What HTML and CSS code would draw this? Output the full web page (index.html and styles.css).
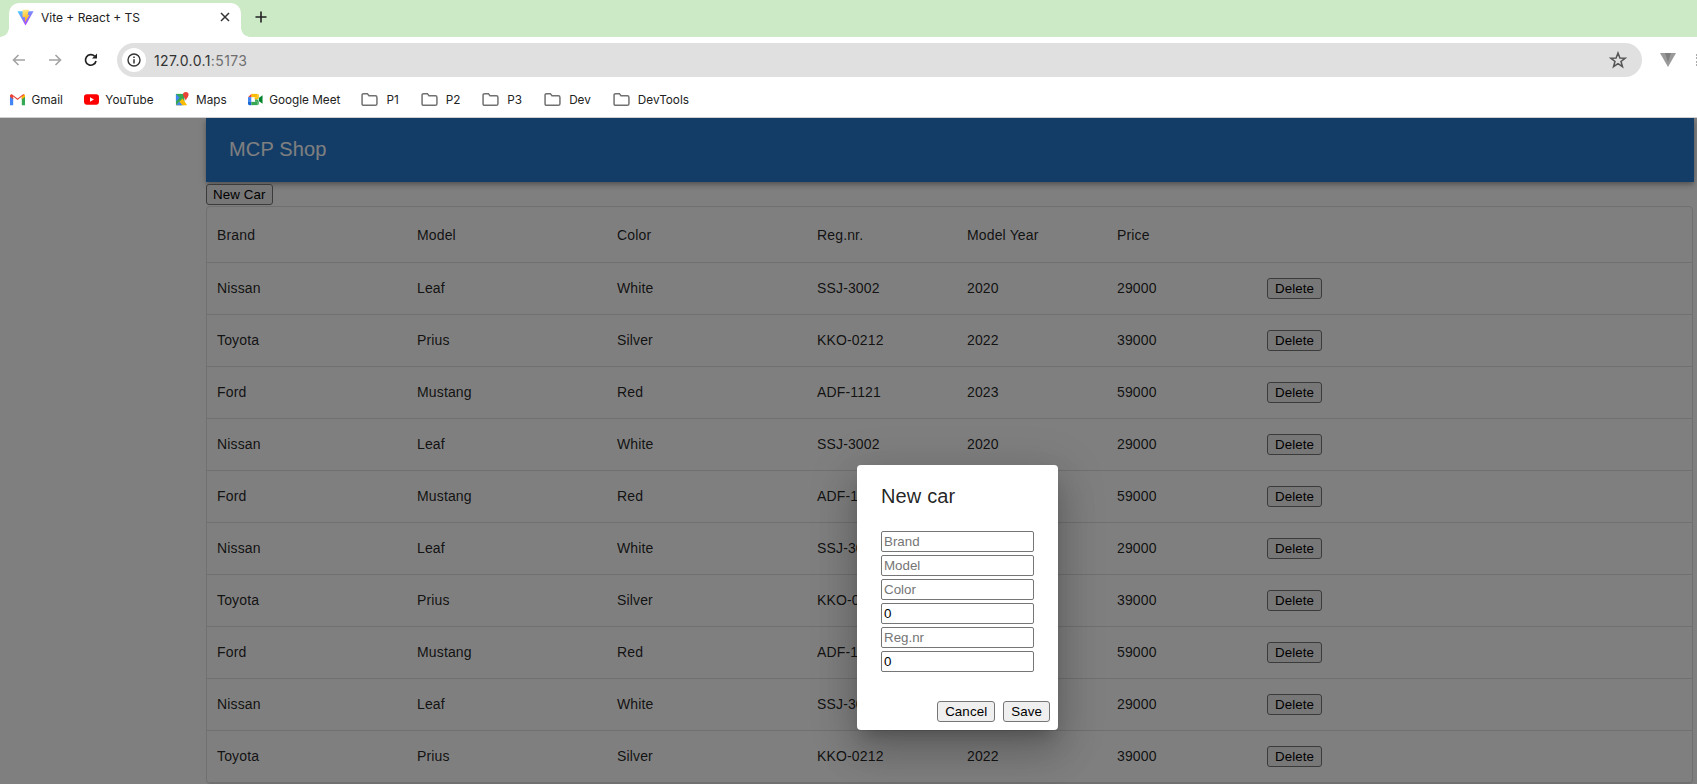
FILE: index.html
```html
<!DOCTYPE html>
<html lang="en">
<head>
<meta charset="UTF-8">
<title>Vite + React + TS</title>
<link rel="stylesheet" href="styles.css">
</head>
<body>

<div class="chrome">
    <div class="tabstrip">
        <div class="tab">
            <svg class="favicon" viewBox="0 0 20 20">
                <defs>
                    <linearGradient id="viteA" x1="0" y1="0" x2="0.7" y2="1"><stop offset="0" stop-color="#41d1ff"/><stop offset="1" stop-color="#bd34fe"/></linearGradient>
                    <linearGradient id="viteB" x1="0.3" y1="0" x2="0.5" y2="1"><stop offset="0" stop-color="#ffea83"/><stop offset="1" stop-color="#ffa800"/></linearGradient>
                </defs>
                <path d="M0.5 2.5 L19.5 2.5 L10 19.5 Z" fill="url(#viteA)"/>
                <path d="M6.5 1 L14 1 L12.5 7 L14.5 7 L9.5 15.5 L9.5 9.5 L6.5 9.5 Z" fill="url(#viteB)"/>
            </svg>
            <span class="tab-title">Vite + React + TS</span>
            <svg class="tab-close" viewBox="0 0 10 10"><path d="M1 1 L9 9 M9 1 L1 9" stroke="#333" stroke-width="1.5"/></svg>
        </div>
        <svg class="new-tab" viewBox="0 0 12 12"><path d="M6 0.5 V11.5 M0.5 6 H11.5" stroke="#222" stroke-width="1.6"/></svg>
    </div>

    <div class="toolbar">
        <svg class="nav-icon" viewBox="0 0 16 16"><path d="M14 8 H2.5 M7.5 3 L2.5 8 L7.5 13" fill="none" stroke="#a3a3a3" stroke-width="1.6"/></svg>
        <svg class="nav-icon" viewBox="0 0 16 16"><path d="M2 8 H13.5 M8.5 3 L13.5 8 L8.5 13" fill="none" stroke="#a3a3a3" stroke-width="1.6"/></svg>
        <svg class="nav-icon" viewBox="0 0 16 16"><path d="M13 9 A5.3 5.3 0 1 1 11.6 4.2" fill="none" stroke="#222" stroke-width="1.7"/><path d="M14 1.5 V6.5 H9 Z" fill="#222"/></svg>
        <div class="omnibox">
            <div class="site-info">
                <svg viewBox="0 0 14 14"><circle cx="7" cy="7" r="6" fill="none" stroke="#333" stroke-width="1.4"/><path d="M7 6.2 V10.4 M7 3.6 V5" stroke="#333" stroke-width="1.5"/></svg>
            </div>
            <span class="url">127.0.0.1<span class="url-port">:5173</span></span>
            <svg class="star" viewBox="0 0 18 18"><path d="M9 2 L10.9 7 L16.2 7.2 L12 10.5 L13.5 15.7 L9 12.7 L4.5 15.7 L6 10.5 L1.8 7.2 L7.1 7 Z" fill="none" stroke="#555" stroke-width="1.5"/></svg>
        </div>
        <svg class="ext-vite" viewBox="0 0 16 14"><path d="M0 0 H16 L8 14 Z" fill="#9a9a9a"/><path d="M5 0 H11 L8 9 Z" fill="#7e7e7e"/></svg>
        <div class="ext-menu"></div>
    </div>

    <div class="bookmarks">
        <div class="bookmark">
            <svg class="bm-icon" viewBox="0 0 16 12"><path d="M0 2 L0 12 H3.4 V4.5 Z" fill="#4285f4"/><path d="M16 2 L16 12 H12.6 V4.5 Z" fill="#34a853"/><path d="M0 2 Q0 0 2 0.4 L8 5 L14 0.4 Q16 0 16 2 L16 3 L12.6 5.6 V2.7 L8 6.4 L3.4 2.7 V5.6 L0 3 Z" fill="#ea4335"/><path d="M12.6 2.7 L16 0.6 V3 L12.6 5.6 Z" fill="#fbbc04"/></svg>
            Gmail
        </div>
        <div class="bookmark">
            <svg class="bm-icon" viewBox="0 0 16 12"><rect x="0" y="0.5" width="16" height="11" rx="3" fill="#f00"/><path d="M6.4 3.6 L10.6 6 L6.4 8.4 Z" fill="#fff"/></svg>
            YouTube
        </div>
        <div class="bookmark">
            <svg class="bm-icon" viewBox="0 0 16 16"><path d="M1 2 L10 2 L10 14 L1 14 Z" fill="#34a853"/><path d="M1 14 L8 7 L13 14 Z" fill="#fbbc04"/><path d="M1 14 L4.5 10 L8 14 Z" fill="#4285f4"/><path d="M1 2 L5 6 L1 10 Z" fill="#4285f4"/><path d="M11.5 0 A3 3 0 0 1 14.5 3 C14.5 5 12.5 6.5 11.5 9 C10.5 6.5 8.5 5 8.5 3 A3 3 0 0 1 11.5 0 Z" fill="#ea4335"/></svg>
            Maps
        </div>
        <div class="bookmark">
            <svg class="bm-icon" viewBox="0 0 16 14"><path d="M3.5 1 H10 V4.5 H3.5 Z" fill="#fbbc04"/><path d="M0 4.5 L3.5 1 V4.5 Z" fill="#ea4335"/><path d="M0 4.5 H3.5 V9.5 H0 Z" fill="#4285f4"/><path d="M0 9.5 H3.5 V13 H1.5 Q0 13 0 11.5 Z" fill="#1967d2"/><path d="M3.5 9.5 H10 V13 H3.5 Z" fill="#34a853"/><path d="M10 1 Q11.5 1 11.5 2.5 V5 L10 7 L7 7 L7 4.5 H10 Z" fill="#fbbc04"/><path d="M10 13 Q11.5 13 11.5 11.5 V9 L10 7 L7.5 7 L7.5 9.5 H10 Z" fill="#34a853"/><path d="M11.5 5.5 L15.5 2.5 V11.5 L11.5 8.5 Z" fill="#00832d"/></svg>
            Google Meet
        </div>
        <div class="bookmark">
            <svg class="bm-icon folder" viewBox="0 0 16 14"><path d="M1 3 Q1 1.5 2.5 1.5 H6 L7.5 3.5 H13.5 Q15 3.5 15 5 V11 Q15 12.5 13.5 12.5 H2.5 Q1 12.5 1 11 Z" fill="none" stroke="#707070" stroke-width="1.4"/></svg>
            P1
        </div>
        <div class="bookmark">
            <svg class="bm-icon folder" viewBox="0 0 16 14"><path d="M1 3 Q1 1.5 2.5 1.5 H6 L7.5 3.5 H13.5 Q15 3.5 15 5 V11 Q15 12.5 13.5 12.5 H2.5 Q1 12.5 1 11 Z" fill="none" stroke="#707070" stroke-width="1.4"/></svg>
            P2
        </div>
        <div class="bookmark">
            <svg class="bm-icon folder" viewBox="0 0 16 14"><path d="M1 3 Q1 1.5 2.5 1.5 H6 L7.5 3.5 H13.5 Q15 3.5 15 5 V11 Q15 12.5 13.5 12.5 H2.5 Q1 12.5 1 11 Z" fill="none" stroke="#707070" stroke-width="1.4"/></svg>
            P3
        </div>
        <div class="bookmark">
            <svg class="bm-icon folder" viewBox="0 0 16 14"><path d="M1 3 Q1 1.5 2.5 1.5 H6 L7.5 3.5 H13.5 Q15 3.5 15 5 V11 Q15 12.5 13.5 12.5 H2.5 Q1 12.5 1 11 Z" fill="none" stroke="#707070" stroke-width="1.4"/></svg>
            Dev
        </div>
        <div class="bookmark">
            <svg class="bm-icon folder" viewBox="0 0 16 14"><path d="M1 3 Q1 1.5 2.5 1.5 H6 L7.5 3.5 H13.5 Q15 3.5 15 5 V11 Q15 12.5 13.5 12.5 H2.5 Q1 12.5 1 11 Z" fill="none" stroke="#707070" stroke-width="1.4"/></svg>
            DevTools
        </div>
    </div>
</div>

<div class="viewport">
    <div class="app">
        <header class="appbar">MCP Shop</header>
        <button class="btn new-car">New Car</button>
        <div class="grid">
            <div class="row head">
                <div class="cell">Brand</div><div class="cell">Model</div><div class="cell">Color</div><div class="cell short">Reg.nr.</div><div class="cell short">Model Year</div><div class="cell short">Price</div><div class="cell"></div>
            </div>
            <div class="row"><div class="cell">Nissan</div><div class="cell">Leaf</div><div class="cell">White</div><div class="cell short">SSJ-3002</div><div class="cell short">2020</div><div class="cell short">29000</div><div class="cell"><button class="btn">Delete</button></div></div>
            <div class="row"><div class="cell">Toyota</div><div class="cell">Prius</div><div class="cell">Silver</div><div class="cell short">KKO-0212</div><div class="cell short">2022</div><div class="cell short">39000</div><div class="cell"><button class="btn">Delete</button></div></div>
            <div class="row"><div class="cell">Ford</div><div class="cell">Mustang</div><div class="cell">Red</div><div class="cell short">ADF-1121</div><div class="cell short">2023</div><div class="cell short">59000</div><div class="cell"><button class="btn">Delete</button></div></div>
            <div class="row"><div class="cell">Nissan</div><div class="cell">Leaf</div><div class="cell">White</div><div class="cell short">SSJ-3002</div><div class="cell short">2020</div><div class="cell short">29000</div><div class="cell"><button class="btn">Delete</button></div></div>
            <div class="row"><div class="cell">Ford</div><div class="cell">Mustang</div><div class="cell">Red</div><div class="cell short">ADF-1121</div><div class="cell short">2023</div><div class="cell short">59000</div><div class="cell"><button class="btn">Delete</button></div></div>
            <div class="row"><div class="cell">Nissan</div><div class="cell">Leaf</div><div class="cell">White</div><div class="cell short">SSJ-3002</div><div class="cell short">2020</div><div class="cell short">29000</div><div class="cell"><button class="btn">Delete</button></div></div>
            <div class="row"><div class="cell">Toyota</div><div class="cell">Prius</div><div class="cell">Silver</div><div class="cell short">KKO-0212</div><div class="cell short">2022</div><div class="cell short">39000</div><div class="cell"><button class="btn">Delete</button></div></div>
            <div class="row"><div class="cell">Ford</div><div class="cell">Mustang</div><div class="cell">Red</div><div class="cell short">ADF-1121</div><div class="cell short">2023</div><div class="cell short">59000</div><div class="cell"><button class="btn">Delete</button></div></div>
            <div class="row"><div class="cell">Nissan</div><div class="cell">Leaf</div><div class="cell">White</div><div class="cell short">SSJ-3002</div><div class="cell short">2020</div><div class="cell short">29000</div><div class="cell"><button class="btn">Delete</button></div></div>
            <div class="row"><div class="cell">Toyota</div><div class="cell">Prius</div><div class="cell">Silver</div><div class="cell short">KKO-0212</div><div class="cell short">2022</div><div class="cell short">39000</div><div class="cell"><button class="btn">Delete</button></div></div>
        </div>
    </div>

    <div class="backdrop"></div>

    <div class="dialog">
        <h2 class="dialog-title">New car</h2>
        <div class="dialog-body">
            <input class="field" placeholder="Brand">
            <input class="field" placeholder="Model">
            <input class="field" placeholder="Color">
            <input class="field" value="0">
            <input class="field" placeholder="Reg.nr">
            <input class="field" value="0">
        </div>
        <div class="dialog-actions">
            <button class="btn">Cancel</button>
            <button class="btn">Save</button>
        </div>
    </div>
</div>

</body>
</html>
```

FILE: styles.css
```css
html, body {
    margin: 0;
    padding: 0;
    height: 784px;
    overflow: hidden;
    font-family: 'Inter', 'Liberation Sans', sans-serif;
    background: #fff;
}

/* browser frame */
.chrome {
    height: 118px;
    display: flex;
    flex-direction: column;
    background: #fff;
}
.tabstrip {
    height: 37px;
    flex-shrink: 0;
    background: #cbeac5;
    display: flex;
    align-items: flex-end;
    padding-left: 9px;
    box-sizing: border-box;
}
.tab {
    position: relative;
    width: 232px;
    height: 34px;
    background: #fff;
    border-radius: 10px 10px 0 0;
    display: flex;
    align-items: center;
    padding: 0 8px 6px;
    box-sizing: border-box;
}
/* little flares at the foot of the active tab */
.tab::before, .tab::after {
    content: "";
    position: absolute;
    bottom: 0;
    width: 9px;
    height: 9px;
}
.tab::before {
    left: -9px;
    background: radial-gradient(circle at 0 0, #cbeac5 8.5px, #fff 9px);
}
.tab::after {
    right: -9px;
    background: radial-gradient(circle at 100% 0, #cbeac5 8.5px, #fff 9px);
}
.favicon {
    width: 17px;
    height: 17px;
    margin-right: 7px;
}
.tab-title {
    font-size: 12px;
    color: #222;
    flex: 1;
}
.tab-close {
    width: 10px;
    height: 10px;
    margin-right: 3px;
}
.new-tab {
    width: 12px;
    height: 12px;
    margin: 0 0 14px 14px;
}
.toolbar {
    height: 46px;
    flex-shrink: 0;
    display: flex;
    align-items: center;
    padding: 0 0 0 11px;
    box-sizing: border-box;
    overflow: hidden;
}
.nav-icon {
    width: 16px;
    height: 16px;
    margin-right: 20px;
    flex-shrink: 0;
}
.omnibox {
    width: 1525px;
    height: 34px;
    flex-shrink: 0;
    margin-left: -2px;
    background: #e0e0e0;
    border-radius: 17px;
    display: flex;
    align-items: center;
    padding: 0 15px 0 5px;
    box-sizing: border-box;
}
.site-info {
    width: 24px;
    height: 24px;
    border-radius: 50%;
    background: #fff;
    display: flex;
    align-items: center;
    justify-content: center;
    margin-right: 8px;
}
.site-info svg {
    width: 14px;
    height: 14px;
}
.url {
    flex: 1;
    font-size: 14px;
    color: #333;
    letter-spacing: 0.4px;
}
.url-port {
    color: #6f6f6f;
}
.star {
    width: 18px;
    height: 18px;
}
.ext-vite {
    width: 16px;
    height: 14px;
    margin-left: 18px;
    flex-shrink: 0;
}
.ext-menu {
    width: 3px;
    height: 12px;
    margin-left: 20px;
    flex-shrink: 0;
    border-left: 2px dotted #aaa;
}
.bookmarks {
    height: 35px;
    flex-shrink: 0;
    display: flex;
    align-items: center;
    padding: 0 0 1px 10px;
    box-sizing: border-box;
    border-bottom: 1px solid #d0d0d0;
}
.bookmark {
    display: flex;
    align-items: center;
    font-size: 11.75px;
    color: #222;
    margin-right: 21px;
}
.bookmark:nth-child(n+5) {
    margin-right: 22px;
}
.bm-icon {
    width: 15px;
    height: 15px;
    margin-right: 6.5px;
}
.folder {
    width: 17px;
    height: 15px;
    margin-right: 8px;
}

/* page */
.viewport {
    position: relative;
    height: 666px;
    overflow: hidden;
    background: #fff;
}
.app {
    margin-left: 206px;
    width: 1488px;
}
.appbar {
    height: 64px;
    background: #267ace;
    color: #fff;
    font-family: 'Liberation Sans', sans-serif;
    font-size: 20px;
    letter-spacing: 0.15px;
    line-height: 62px;
    padding-left: 23px;
    box-sizing: border-box;
    box-shadow: 0 2px 4px -1px rgba(0,0,0,.2), 0 4px 5px rgba(0,0,0,.14), 0 1px 10px rgba(0,0,0,.12);
}
.btn {
    font-family: 'Liberation Sans', sans-serif;
    font-size: 13.33px;
    letter-spacing: 0.1px;
    height: 21px;
    padding: 0 6.5px;
    background: #efefef;
    border: 1px solid #767676;
    border-radius: 3px;
    color: #000;
    cursor: pointer;
}
.new-car {
    display: block;
    margin-top: 2px;
    padding: 0 6px;
}
.grid {
    margin-top: 1px;
    width: 1487px;
    border: 1px solid #e0e0e0;
    border-radius: 4px;
    box-sizing: border-box;
    font-size: 14px;
    letter-spacing: 0.15px;
    color: rgba(0,0,0,.87);
    font-family: 'Liberation Sans', sans-serif;
}
.row {
    display: flex;
    height: 52px;
    border-bottom: 1px solid #e0e0e0;
    box-sizing: border-box;
}
.row:not(.head) .cell {
    padding-bottom: 1px;
}
.row .btn {
    margin-top: 1px;
    padding: 0 7px;
}
.head {
    height: 56px;
}
.cell {
    width: 200px;
    padding: 0 10px;
    box-sizing: border-box;
    display: flex;
    align-items: center;
}
.short {
    width: 150px;
}

/* new car dialog */
.backdrop {
    position: absolute;
    inset: 0;
    background: rgba(0,0,0,.5);
}
.dialog {
    position: absolute;
    left: 857px;
    top: 347px;
    width: 201px;
    height: 265px;
    background: #fff;
    border-radius: 4px;
    box-shadow: 0 11px 15px -7px rgba(0,0,0,.2), 0 24px 38px 3px rgba(0,0,0,.14), 0 9px 46px 8px rgba(0,0,0,.12);
    display: flex;
    flex-direction: column;
    box-sizing: border-box;
    font-family: 'Liberation Sans', sans-serif;
}
.dialog-title {
    margin: 0;
    padding: 15px 24px 16px;
    font-size: 20px;
    font-weight: 400;
    letter-spacing: 0.15px;
    line-height: 32px;
    color: rgba(0,0,0,.87);
}
.dialog-body {
    padding: 3px 24px 0;
    flex: 1;
    display: flex;
    flex-direction: column;
    gap: 3px;
}
.field {
    width: 153px;
    height: 21px;
    padding: 1px 2px;
    box-sizing: border-box;
    border: 1px solid #767676;
    border-radius: 2px;
    font-family: 'Liberation Sans', sans-serif;
    font-size: 13.33px;
    color: #000;
    outline: none;
}
.field::placeholder {
    color: #757575;
}
.dialog-actions {
    display: flex;
    justify-content: flex-end;
    gap: 8px;
    padding: 0 8px 8px;
}
.dialog-actions .btn {
    padding: 0 7px;
}
```
